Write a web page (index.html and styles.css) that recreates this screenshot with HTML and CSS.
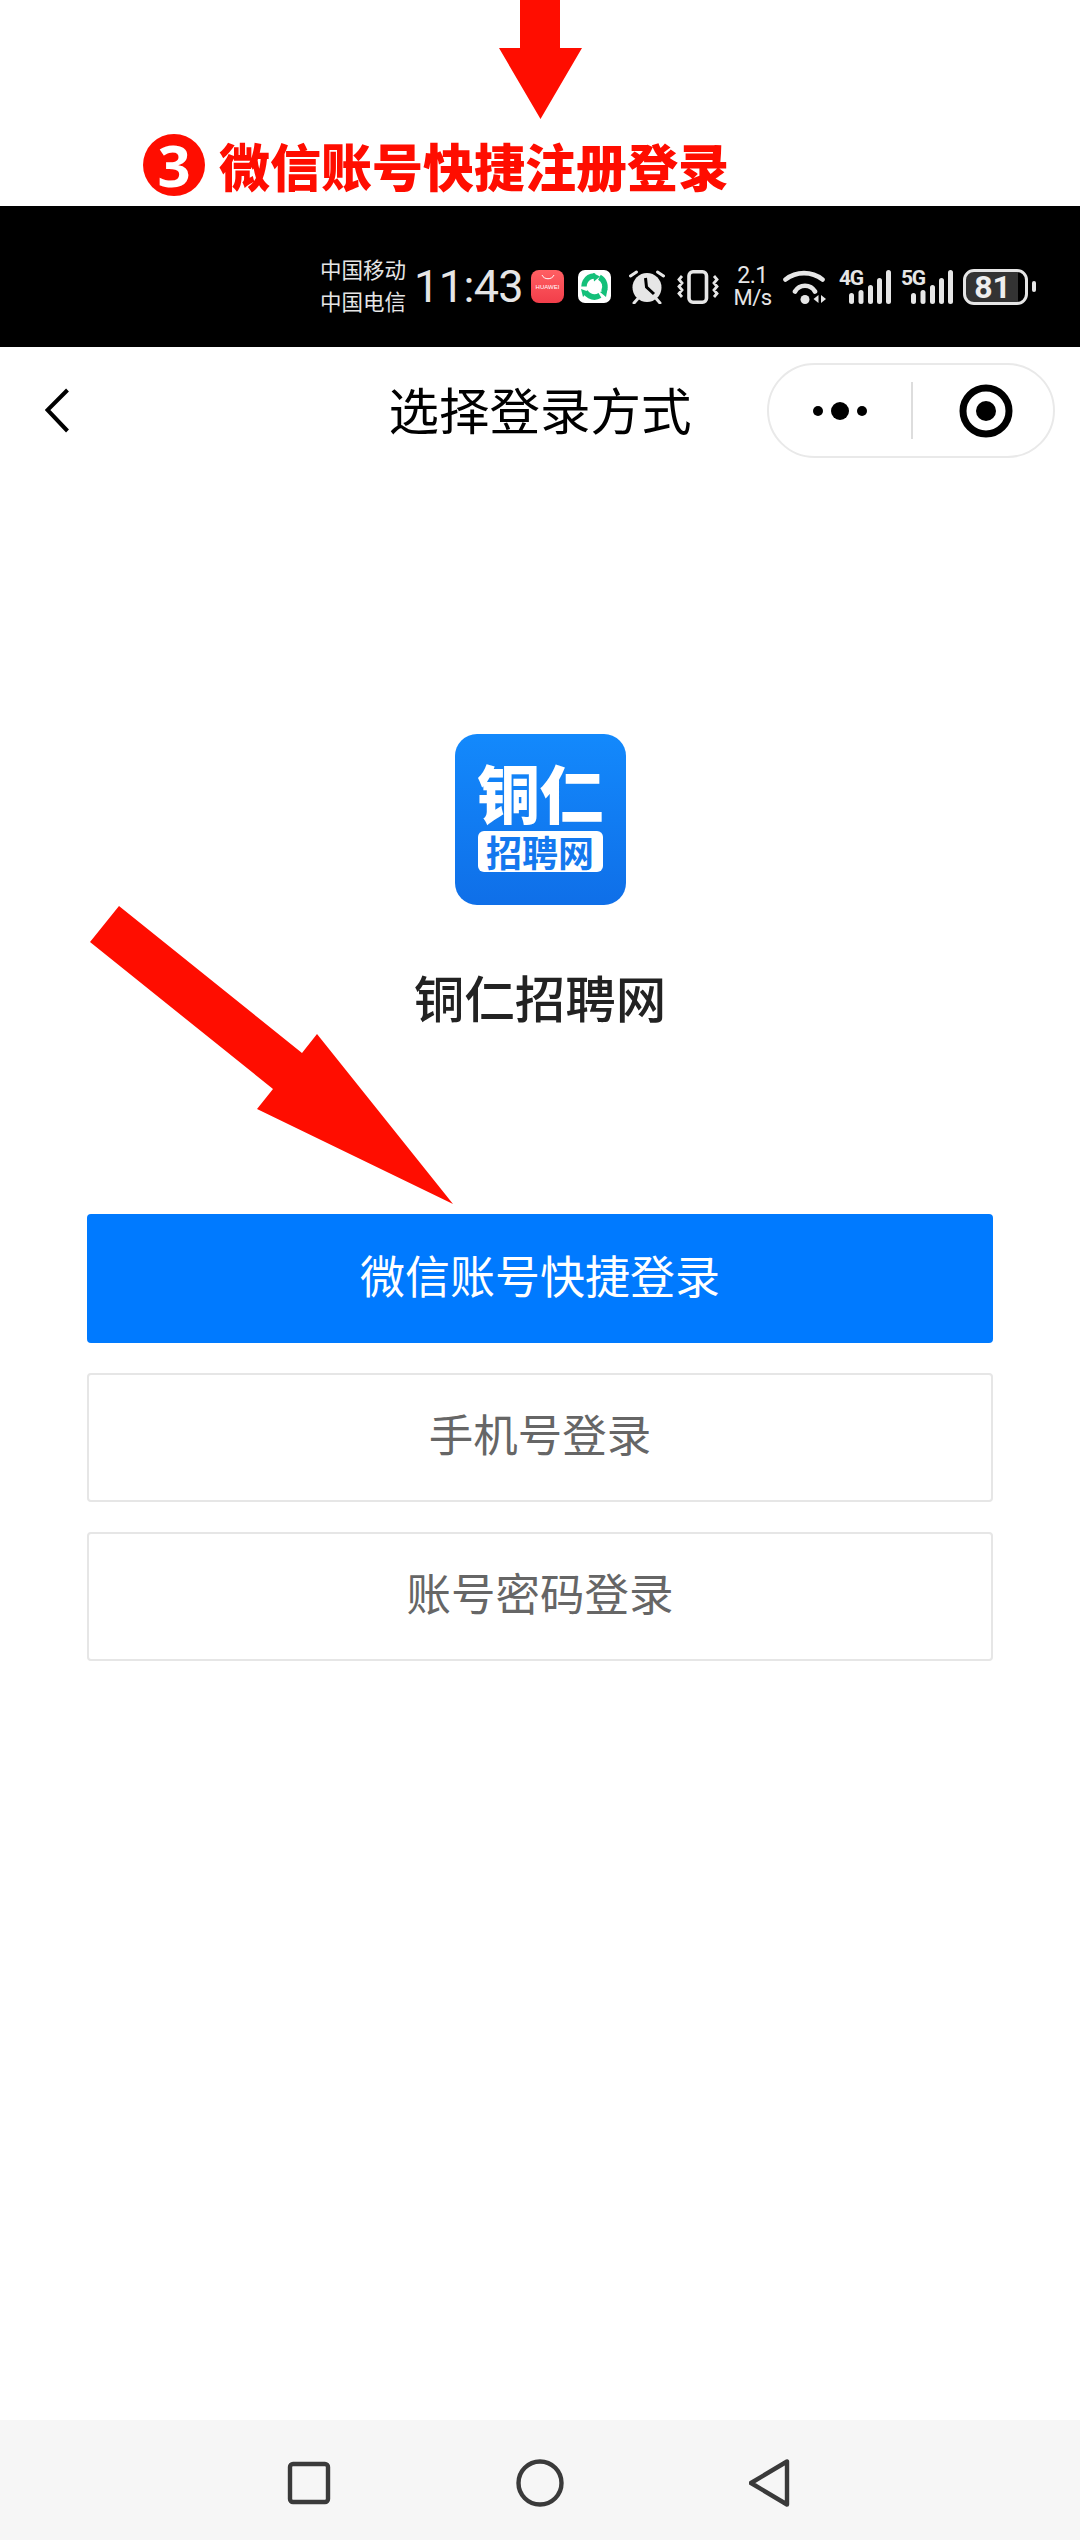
FILE: index.html
```html
<!DOCTYPE html>
<html lang="zh-CN">
<head>
<meta charset="utf-8">
<title>选择登录方式</title>
<link rel="stylesheet" href="styles.css">
</head>
<body>
<div class="page">
  <header class="banner">
    <svg class="down-arrow" width="83" height="119" viewBox="0 0 83 119"><polygon points="21,0 61,0 61,48 83,48 41.5,119 0,48 21,48"/></svg>
    <div class="caption">
      <span class="step">3</span>
      <span class="caption-text">微信账号快捷注册登录</span>
    </div>
  </header>

  <div class="statusbar">
    <div class="carrier"><span>中国移动</span><span>中国电信</span></div>
    <div class="clock">11:43</div>
    <div class="app-huawei">
      <svg width="16" height="7" viewBox="0 0 16 7"><path d="M2 1c2 5 10 5 12 0" fill="none" stroke="#fff" stroke-width="1"/></svg>
      <span>HUAWEI</span>
    </div>
    <div class="app-green">
      <svg width="33" height="33" viewBox="0 0 33 33" fill="none">
        <g transform="rotate(-62 16.500 16.500)"><circle cx="16.500" cy="16.500" r="10.500" stroke="#14c07a" stroke-width="5.500" stroke-dasharray="17 5"/></g>
        <path d="M15 3l7 3.500-6 5zM29.500 19l-1.500 8-6-5zM5 27l-2-8 7 2.500z" fill="#14c07a"/>
      </svg>
    </div>
    <svg class="alarm" width="36" height="34" viewBox="0 0 36 34">
      <circle cx="18" cy="17.500" r="14.500" fill="#e6e6e6"/>
      <path d="M16.500 8l1 9 7.500 7" fill="none" stroke="#000" stroke-width="3"/>
      <path d="M1.500 6l6-4M28.500 2l6 4M5 33l3.500-4M31 33l-3.500-4" fill="none" stroke="#e6e6e6" stroke-width="3" stroke-linecap="round"/>
    </svg>
    <svg class="vibrate" width="42" height="34" viewBox="0 0 42 34" fill="none" stroke="#e6e6e6">
      <rect x="12" y="1.800" width="17.500" height="30.400" rx="4" stroke-width="3.600"/>
      <path d="M5 6l-3 3.500 3 3.500-3 3.500 3 3.500-3 3.500 3 3.500M37 6l3 3.500-3 3.500 3 3.500-3 3.500 3 3.500-3 3.500" stroke-width="2.800"/>
    </svg>
    <div class="speed"><span class="speed-num">2.1</span><span class="speed-unit">M/s</span></div>
    <svg class="wifi" width="44" height="34" viewBox="0 0 44 34" fill="none">
      <path d="M2.500 9.500a30 30 0 0 1 37 0M12 21.500a11.500 11.500 0 0 1 20 0" stroke="#e6e6e6" stroke-width="4.600" stroke-linecap="round"/>
      <circle cx="22" cy="29.500" r="4.500" fill="#e6e6e6"/>
      <path d="M35.500 25v8l-5-4zM38 25v8l5-4z" fill="#e6e6e6"/>
    </svg>
    <div class="signal signal-first">
      <span class="net">4G</span>
      <svg width="42" height="34" viewBox="0 0 42 34"><g fill="#e6e6e6"><rect x="0" y="23" width="5" height="11" rx="2.500"/><rect x="9.500" y="20" width="5" height="14" rx="2.500"/><rect x="19" y="15" width="5" height="19" rx="2.500"/><rect x="28" y="8" width="5" height="26" rx="2.500"/><rect x="37" y="0" width="5" height="34" rx="2.500"/></g></svg>
    </div>
    <div class="signal signal-second">
      <span class="net">5G</span>
      <svg width="42" height="34" viewBox="0 0 42 34"><g fill="#e6e6e6"><rect x="0" y="23" width="5" height="11" rx="2.500"/><rect x="9.500" y="20" width="5" height="14" rx="2.500"/><rect x="19" y="15" width="5" height="19" rx="2.500"/><rect x="28" y="8" width="5" height="26" rx="2.500"/><rect x="37" y="0" width="5" height="34" rx="2.500"/></g></svg>
    </div>
    <div class="battery">
      <div class="cell"><span class="level">81</span></div>
      <span class="nub"></span>
    </div>
  </div>

  <nav class="navbar">
    <svg class="back" width="25" height="45" viewBox="0 0 25 45"><path d="M22.500 2L2.500 22l20 21" fill="none" stroke="#000" stroke-width="4"/></svg>
    <h1 class="title">选择登录方式</h1>
    <div class="capsule">
      <div class="more"><i class="dot"></i><i class="dot dot-big"></i><i class="dot"></i></div>
      <span class="divider"></span>
      <svg class="target" width="54" height="54" viewBox="0 0 54 54"><circle cx="27" cy="27" r="23" fill="none" stroke="#000" stroke-width="7"/><circle cx="27" cy="27" r="10" fill="#000"/></svg>
    </div>
  </nav>

  <main class="content">
    <div class="logo">
      <span class="logo-top">铜仁</span>
      <span class="logo-pill">招聘网</span>
    </div>
    <p class="app-name">铜仁招聘网</p>
    <div class="buttons">
      <button class="btn btn-primary">微信账号快捷登录</button>
      <button class="btn">手机号登录</button>
      <button class="btn">账号密码登录</button>
    </div>
    <svg class="pointer" width="1080" height="320" viewBox="0 0 1080 320"><polygon points="119,6 302,153 317,134 453,304 257,209 273,189 90,42"/></svg>
  </main>

  <footer class="sysnav">
    <svg width="44" height="44" viewBox="0 0 44 44"><rect x="3" y="3" width="38" height="38" rx="3" fill="none" stroke="#3a3a3a" stroke-width="4.400"/></svg>
    <svg width="48" height="48" viewBox="0 0 48 48"><circle cx="24" cy="24" r="21.500" fill="none" stroke="#3a3a3a" stroke-width="4.400"/></svg>
    <svg width="44" height="48" viewBox="0 0 44 48"><path d="M2 24L38 2.500v43z" fill="none" stroke="#3a3a3a" stroke-width="4.400" stroke-linejoin="round"/></svg>
  </footer>
</div>
</body>
</html>
```
FILE: styles.css
```css
* { box-sizing: border-box; }
html, body { margin: 0; padding: 0; background: #fff; }
body { font-family: "Noto Sans CJK SC", "Noto Sans", sans-serif; }
.page { width: 1080px; height: 2540px; display: flex; flex-direction: column; position: relative; overflow: hidden; }

/* top annotation */
.banner { height: 206px; display: flex; flex-direction: column; align-items: center; }
.down-arrow { fill: #ff0d00; flex: none; }
.caption { align-self: flex-start; display: flex; align-items: center; gap: 14px; margin: 14px 0 0 143px; height: 64px; }
.step { width: 62px; height: 62px; border-radius: 50%; background: #ff0d00; color: #fff; font: 700 58px/62px "Open Sans", sans-serif; text-align: center; }
.caption-text { color: #ff0d00; font-size: 51px; font-weight: 900; line-height: 64px; white-space: nowrap; }

/* status bar */
.statusbar { height: 141px; background: #000; color: #e6e6e6; display: flex; align-items: center; padding: 20px 0 0 320px; flex: none; }
.carrier { width: 86px; display: flex; flex-direction: column; font-size: 21.500px; line-height: 32px; white-space: nowrap; margin-top: -3px; }
.clock { margin-left: 8px; width: 106px; font: 400 45px/1 Roboto, sans-serif; letter-spacing: -.600px; white-space: nowrap; }
.app-huawei { margin-left: 11px; width: 33px; height: 33px; border-radius: 8px; background: linear-gradient(#ff5f63, #f23e4a); display: flex; flex-direction: column; align-items: center; padding-top: 4px; color: #fff; flex: none; }
.app-huawei svg { display: block; }
.app-huawei span { font: 400 6px/9px "Liberation Sans", sans-serif; margin-top: 2px; }
.app-green { margin-left: 14px; width: 33px; height: 33px; border-radius: 7px; background: #fff; flex: none; }
.app-green svg { display: block; }
.alarm { margin-left: 18px; flex: none; }
.vibrate { margin-left: 12px; flex: none; }
.speed { margin-left: 14px; width: 39px; display: flex; flex-direction: column; align-items: center; font-family: Roboto, sans-serif; }
.speed-num { font-size: 23px; line-height: 22px; letter-spacing: -.500px; }
.speed-unit { font-size: 22px; line-height: 21px; letter-spacing: -.500px; }
.wifi { margin-left: 11px; flex: none; }
.signal { position: relative; width: 52px; height: 34px; flex: none; display: flex; justify-content: flex-end; }
.signal-first { margin-left: 12px; }
.signal-second { margin-left: 10px; }
.net { position: absolute; left: 0; top: -2px; font: 700 21px/20px Roboto, sans-serif; letter-spacing: -1.200px; }
.battery { margin-left: 10px; display: flex; align-items: center; gap: 4px; flex: none; }
.cell { width: 65px; height: 36px; border: 3px solid #e6e6e6; border-radius: 11px; background: linear-gradient(90deg, #333 88%, #000 88%); display: flex; align-items: center; justify-content: center; padding-right: 6px; }
.level { font: 700 32px/1 Roboto, sans-serif; color: #eee; }
.nub { width: 4px; height: 11px; border-radius: 2px; background: #e6e6e6; }

/* nav bar */
.navbar { height: 127px; display: grid; grid-template-columns: 1fr auto 1fr; align-items: center; padding: 0 25px; flex: none; }
.back { display: block; margin-left: 20px; }
.title { margin: -5px 0 0; font-size: 50.500px; font-weight: 400; line-height: 70px; color: #000; }
.capsule { justify-self: end; width: 288px; height: 95px; border: 2px solid #e9e9e9; border-radius: 48px; display: flex; align-items: center; }
.more { width: 142px; display: flex; align-items: center; justify-content: center; gap: 8px; }
.dot { width: 10px; height: 10px; border-radius: 50%; background: #000; }
.dot-big { width: 18px; height: 18px; }
.divider { width: 2px; height: 57px; background: #ddd; }
.target { margin-left: 46px; }

/* content */
.content { flex: 1; position: relative; display: flex; flex-direction: column; align-items: center; padding-top: 260px; }
.logo { width: 171px; height: 171px; border-radius: 22px; background: linear-gradient(#1389fc, #0f6fe8); display: flex; flex-direction: column; align-items: center; color: #fff; font-weight: 700; }
.logo-top { font-size: 63px; line-height: 70px; margin-top: 22px; font-weight: 900; }
.logo-pill { margin-top: 5px; width: 125px; height: 41px; border-radius: 6px; background: #fff; color: #1478ee; font-size: 36px; line-height: 40px; text-align: center; }
.app-name { margin: 55px 0 0; font-size: 50.500px; line-height: 72px; color: #222; font-weight: 500; }
.buttons { width: 906px; margin-top: 182px; display: flex; flex-direction: column; gap: 30px; }
.btn { height: 129px; border: 2px solid #e6e6e6; border-radius: 4px; background: #fff; color: #666; font: 400 44.500px/1 "Noto Sans CJK SC", sans-serif; padding: 0 0 8px; display: block; width: 100%; }
.btn-primary { background: #007aff; border-color: #007aff; color: #fff; font-size: 45px; }
.pointer { position: absolute; left: 0; top: 426px; fill: #ff0d00; pointer-events: none; }

/* system nav */
.sysnav { height: 120px; background: #f6f6f6; display: flex; align-items: center; gap: 185px; flex: none; padding: 6px 0 0 287px; }
.sysnav svg { display: block; }
```
